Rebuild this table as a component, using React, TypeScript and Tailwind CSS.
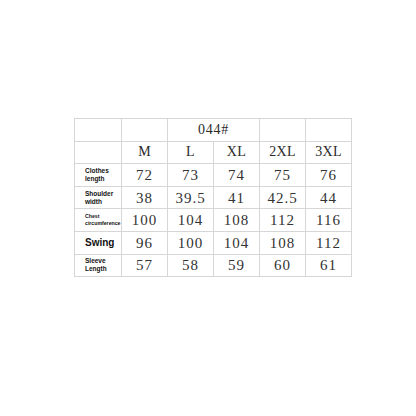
import React from "react";

const sizes = ["M", "L", "XL", "2XL", "3XL"];
const rows: { label: React.ReactNode; cls: string; vals: string[] }[] = [
  { label: <>Clothes<br />length</>, cls: "text-[6.5px] leading-[8px]", vals: ["72", "73", "74", "75", "76"] },
  { label: <>Shoulder<br />width</>, cls: "text-[6.5px] leading-[8px]", vals: ["38", "39.5", "41", "42.5", "44"] },
  { label: <>Chest<br />circumference</>, cls: "text-[5.2px] leading-[7px]", vals: ["100", "104", "108", "112", "116"] },
  { label: <>Swing</>, cls: "text-[10px] leading-[12px]", vals: ["96", "100", "104", "108", "112"] },
  { label: <>Sleeve<br />Length</>, cls: "text-[6.5px] leading-[8px]", vals: ["57", "58", "59", "60", "61"] },
];

const cell = "border border-[#d6d6d6] h-[22.6px] p-0 text-center align-middle leading-[14px]";
const serif = { fontFamily: '"Liberation Serif", "DejaVu Serif", serif' };

export default function App() {
  return (
    <div className="w-[416px] h-[416px] bg-white pt-[118px] pl-[74px]">
      <table className="border-collapse table-fixed text-[#2a2a2a]" style={serif}>
        <colgroup>
          <col className="w-[47px]" />
          <col className="w-[46px]" />
          <col className="w-[46px]" />
          <col className="w-[46px]" />
          <col className="w-[46px]" />
          <col className="w-[46px]" />
        </colgroup>
        <tbody>
          <tr>
            <td className={cell}></td>
            <td className={cell}></td>
            <td className={cell + " text-[14px] tracking-[0.8px]"} colSpan={2}>044#</td>
            <td className={cell}></td>
            <td className={cell}></td>
          </tr>
          <tr>
            <td className={cell}></td>
            {sizes.map((s) => (
              <td key={s} className={cell + " text-[14px] tracking-[0.3px]"}>{s}</td>
            ))}
          </tr>
          {rows.map((r, i) => (
            <tr key={i}>
              <td className={cell + " text-left pl-[10px]"}>
                <div
                  className={"font-bold text-[#111] " + r.cls}
                  style={{ fontFamily: '"Liberation Sans", Arial, sans-serif' }}
                >
                  {r.label}
                </div>
              </td>
              {r.vals.map((v, j) => (
                <td key={j} className={cell + " text-[15px] tracking-[1px] text-[#333]"}>{v}</td>
              ))}
            </tr>
          ))}
        </tbody>
      </table>
    </div>
  );
}
